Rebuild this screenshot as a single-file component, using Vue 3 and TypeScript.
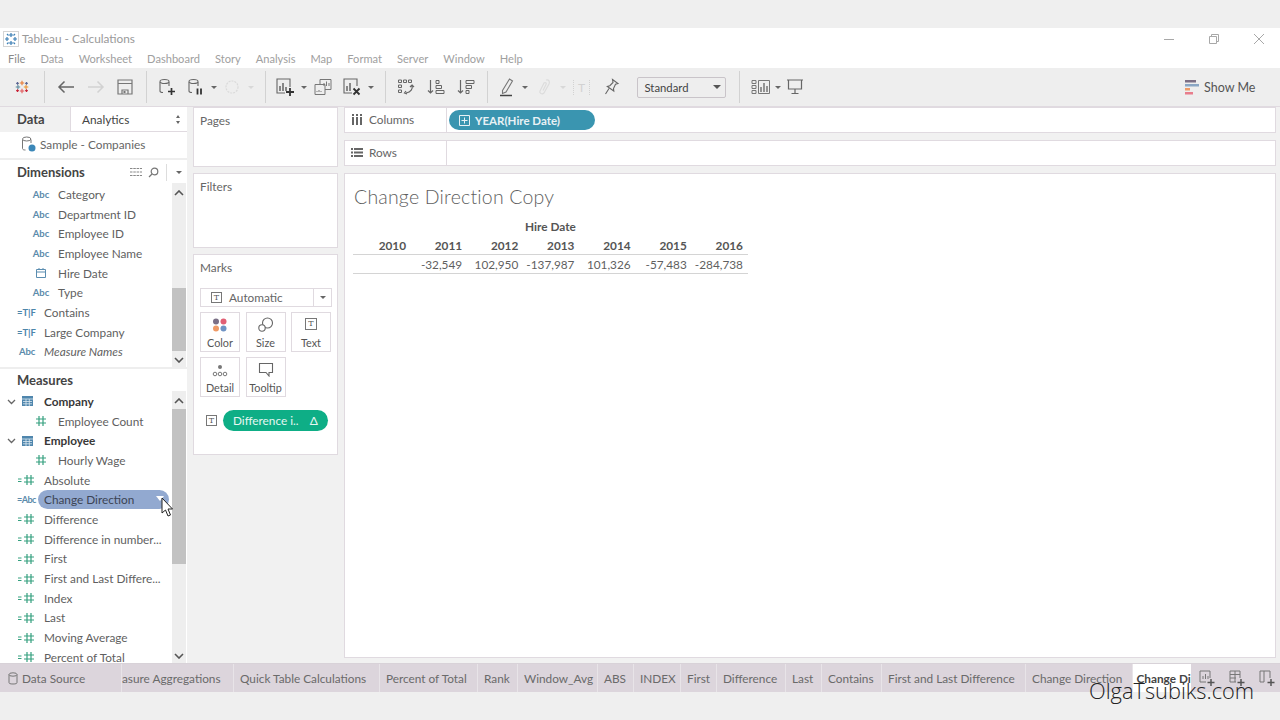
<script setup lang="ts">
type Field = { label: string; icon: string; level: number; bold?: boolean; italic?: boolean; active?: boolean }

const menus = ['File', 'Data', 'Worksheet', 'Dashboard', 'Story', 'Analysis', 'Map', 'Format', 'Server', 'Window', 'Help']

const dimensions: Field[] = [
  { label: 'Category', icon: 'abc', level: 1 },
  { label: 'Department ID', icon: 'abc', level: 1 },
  { label: 'Employee ID', icon: 'abc', level: 1 },
  { label: 'Employee Name', icon: 'abc', level: 1 },
  { label: 'Hire Date', icon: 'date', level: 1 },
  { label: 'Type', icon: 'abc', level: 1 },
  { label: 'Contains', icon: 'tf', level: 0 },
  { label: 'Large Company', icon: 'tf', level: 0 },
  { label: 'Measure Names', icon: 'abc', level: 0, italic: true },
]

const measures: Field[] = [
  { label: 'Company', icon: 'table', level: 0, bold: true },
  { label: 'Employee Count', icon: 'hash', level: 1 },
  { label: 'Employee', icon: 'table', level: 0, bold: true },
  { label: 'Hourly Wage', icon: 'hash', level: 1 },
  { label: 'Absolute', icon: 'calc', level: 0 },
  { label: 'Change Direction', icon: 'calcabc', level: 0, active: true },
  { label: 'Difference', icon: 'calc', level: 0 },
  { label: 'Difference in number...', icon: 'calc', level: 0 },
  { label: 'First', icon: 'calc', level: 0 },
  { label: 'First and Last Differe...', icon: 'calc', level: 0 },
  { label: 'Index', icon: 'calc', level: 0 },
  { label: 'Last', icon: 'calc', level: 0 },
  { label: 'Moving Average', icon: 'calc', level: 0 },
  { label: 'Percent of Total', icon: 'calc', level: 0 },
]

const years = ['2010', '2011', '2012', '2013', '2014', '2015', '2016']
const values = ['', '-32,549', '102,950', '-137,987', '101,326', '-57,483', '-284,738']

// tab widths come from the sheet names as Tableau sized them
const sheets = [
  { name: 'Measure Aggregations', w: 135 },
  { name: 'Quick Table Calculations', w: 146 },
  { name: 'Percent of Total', w: 98 },
  { name: 'Rank', w: 40 },
  { name: 'Window_Avg', w: 80 },
  { name: 'ABS', w: 36 },
  { name: 'INDEX', w: 47 },
  { name: 'First', w: 36 },
  { name: 'Difference', w: 69 },
  { name: 'Last', w: 36 },
  { name: 'Contains', w: 60 },
  { name: 'First and Last Difference', w: 144 },
  { name: 'Change Direction', w: 107 },
]
</script>

<template>
  <div class="app">
    <div class="band"></div>

    <div class="titlebar">
      <svg class="app-icon" width="16" height="16" viewBox="0 0 16 16" fill="none" stroke="#3c7fb5" stroke-width="1.2">
        <rect x="0.5" y="0.5" width="15" height="15" stroke="#d4d4d4" stroke-width="1" />
        <path d="M8 2v4M6 4h4M8 10v4M6 12h4M2 8h4M4 6v4M10 8h4M12 6v4M4 3l1.500 1.500M12 3l-1.500 1.500M4 13l1.500-1.500M12 13l-1.500-1.500" />
      </svg>
      <span class="app-title">Tableau - Calculations</span>
      <div class="win-btns">
        <svg width="12" height="12" viewBox="0 0 12 12" stroke="#a8a8a8" fill="none"><path d="M1 6.500h10" /></svg>
        <svg width="12" height="12" viewBox="0 0 12 12" stroke="#a8a8a8" fill="none"><path d="M1.500 3.500h7v7h-7zM3.500 3.500v-2h7v7h-2" /></svg>
        <svg width="12" height="12" viewBox="0 0 12 12" stroke="#a8a8a8" fill="none"><path d="M1 1l10 10M11 1L1 11" /></svg>
      </div>
    </div>

    <div class="menubar">
      <span v-for="m in menus" :key="m">{{ m }}</span>
    </div>

    <div class="toolbar">
      <div class="slot" style="width: 44px">
        <svg width="18" height="18" viewBox="0 0 20 20" fill="none" stroke-width="1.200">
          <path d="M10 3v5M7.500 5.500h5" stroke="#e8762c" /><path d="M10 12v5M7.500 14.500h5" stroke="#e15759" />
          <path d="M3 10h5M5.500 7.500v5" stroke="#59879b" /><path d="M12 10h5M14.500 7.500v5" stroke="#eb9129" />
          <path d="M5 4.500v3M3.500 6h3M15 4.500v3M13.500 6h3" stroke="#5b6591" /><path d="M5 12.500v3M3.500 14h3M15 12.500v3M13.500 14h3" stroke="#c72035" />
        </svg>
      </div>
      <div class="tb-sep first-sep"></div>

      <div class="slot w31 first-in">
        <svg width="18" height="14" viewBox="0 0 18 14" fill="none" stroke="#666" stroke-width="1.500"><path d="M17 7H2M7.500 1.500L2 7l5.500 5.500" /></svg>
      </div>
      <div class="slot w30">
        <svg width="18" height="14" viewBox="0 0 18 14" fill="none" stroke="#d2d2d2" stroke-width="1.500"><path d="M1 7h15M10.500 1.500L16 7l-5.500 5.500" /></svg>
      </div>
      <div class="slot w30">
        <svg width="16" height="16" viewBox="0 0 16 16" fill="none" stroke="#777" stroke-width="1.200"><path d="M1 1h14v14H1zM1 4.500h14M5 15v-4h6v4" /><rect x="6.500" y="12" width="2" height="2" fill="#777" stroke="none" /></svg>
      </div>
      <div class="tb-sep"></div>

      <div class="slot w30 first-in">
        <svg width="18" height="18" viewBox="0 0 18 18" fill="none" stroke="#666" stroke-width="1.100"><path d="M2 4v9c0 1 1 1.500 3 1.500M11 4v4" /><ellipse cx="6.500" cy="3.500" rx="4.500" ry="2" /><path d="M13.500 10v7M10 13.500h7" stroke="#333" stroke-width="1.700" /></svg>
      </div>
      <div class="slot w28">
        <svg width="18" height="18" viewBox="0 0 18 18" fill="none" stroke="#666" stroke-width="1.100"><path d="M2 4v9c0 1 1 1.500 3 1.500M11 4v4" /><ellipse cx="6.500" cy="3.500" rx="4.500" ry="2" /><path d="M10.500 10.500v6M14 10.500v6" stroke="#333" stroke-width="1.800" /></svg>
      </div>
      <div class="caret-slot w8"><i class="caret"></i></div>
      <div class="slot w30">
        <svg width="16" height="16" viewBox="0 0 16 16" fill="none" stroke="#dadada" stroke-width="1.200" stroke-dasharray="2 1"><circle cx="8" cy="8" r="6" /></svg>
      </div>
      <div class="caret-slot w8"><i class="caret light"></i></div>
      <div class="tb-sep sep-after-caret"></div>

      <div class="slot w30 first-in">
        <svg width="20" height="20" viewBox="0 0 20 20" fill="none" stroke="#666" stroke-width="1.100"><path d="M15 10V2H2v14h8" /><path d="M5 14V9M8 14V6M11 14v-4" stroke-width="1.500" /><path d="M15 11v8M11 15h8" stroke="#333" stroke-width="1.800" /></svg>
      </div>
      <div class="caret-slot w8"><i class="caret"></i></div>
      <div class="slot w30">
        <svg width="18" height="18" viewBox="0 0 18 18" fill="none" stroke="#777" stroke-width="1"><path d="M6 1.500h11v10H6z" /><path d="M1 6.500h10v10H1z" fill="#eee" /><path d="M10 8V5M12.500 8V3.500M15 8V5" /><path d="M3 14v-1M5 14v-2M7 14v-1" /></svg>
      </div>
      <div class="slot w30">
        <svg width="20" height="20" viewBox="0 0 20 20" fill="none" stroke="#666" stroke-width="1.100"><path d="M15 9V2H2v14h8" /><path d="M5 14V9M8 14V6" stroke-width="1.500" /><path d="M11.500 11.500l6 6M17.500 11.500l-6 6" stroke="#333" stroke-width="1.800" /></svg>
      </div>
      <div class="caret-slot w8"><i class="caret"></i></div>
      <div class="tb-sep sep-after-caret"></div>

      <div class="slot w31 first-in">
        <svg width="18" height="18" viewBox="0 0 18 18" fill="none" stroke="#666" stroke-width="1"><path d="M1.500 2h3v2.500h-3zM6.500 2h3v2.500h-3zM11.500 2h3v2.500h-3zM1.500 7h3v2.500h-3zM1.500 12h3v2.500h-3z" /><path d="M15 7c1 4-1 7-6 8M9 13l-1.500 2 2.500 1M13 9l2-2 2 2" stroke-width="1.200" /></svg>
      </div>
      <div class="slot w30">
        <svg width="18" height="18" viewBox="0 0 18 18" fill="none" stroke="#666" stroke-width="1.200"><path d="M3.500 2v13M1 12.500l2.500 2.500L6 12.500" /><path d="M9 2.500h3v3H9zM9 7.500h5.500v3H9zM9 12.500h8v3H9z" stroke-width="1" /></svg>
      </div>
      <div class="slot w30">
        <svg width="18" height="18" viewBox="0 0 18 18" fill="none" stroke="#666" stroke-width="1.200"><path d="M3.500 2v13M1 12.500l2.500 2.500L6 12.500" /><path d="M9 2.500h8v3H9zM9 7.500h5.500v3H9zM9 12.500h3v3H9z" stroke-width="1" /></svg>
      </div>
      <div class="tb-sep"></div>

      <div class="slot w28 first-in">
        <svg width="16" height="20" viewBox="0 0 16 20" fill="none" stroke="#777" stroke-width="1.100"><path d="M3.500 13.500L10.500 2l3 2-6.500 11-3.500 1.500z" /><path d="M1 18.500h12" stroke="#444" stroke-width="1.500" /></svg>
      </div>
      <div class="caret-slot w8"><i class="caret"></i></div>
      <div class="slot w-mid">
        <svg width="14" height="18" viewBox="0 0 14 18" fill="none" stroke="#dcdcdc" stroke-width="1.200"><path d="M9 2c3-1 4 2 3 4l-5 9c-2 2-5 0-4-2l4-8c1-1 3 0 2 1.500l-3 6" /></svg>
      </div>
      <div class="caret-slot w8"><i class="caret light"></i></div>
      <div class="slot w-mid">
        <span class="ghost-t">T</span>
      </div>
      <div class="slot w-mid">
        <svg width="16" height="18" viewBox="0 0 16 18" fill="none" stroke="#666" stroke-width="1.100"><path d="M8.500 1.500l5.500 4-2.500.8-2 4.200.3 2.500-6.500-4.500 2.500-.8 3.200-3.200zM5 10.500L1.500 16" /></svg>
      </div>
      <div class="fit-select">
        <span>Standard</span><i class="caret dark"></i>
      </div>
      <div class="tb-sep sep-select"></div>

      <div class="slot w30 showme-first">
        <svg width="20" height="16" viewBox="0 0 20 16" fill="none" stroke="#777" stroke-width="1"><path d="M1 1.500h4v3H1zM1 6.500h4v3H1zM1 11.500h4v3H1zM7.500 1.500h11v13h-11z" /><path d="M10 13V8M13 13V4M16 13V7" stroke-width="1.500" /></svg>
      </div>
      <div class="caret-slot w5"><i class="caret"></i></div>
      <div class="slot w-mid">
        <svg width="18" height="18" viewBox="0 0 18 18" fill="none" stroke="#666" stroke-width="1.200"><path d="M1 2h16M2.500 2v9h13V2M9 11v4M5.500 15.500h7" /></svg>
      </div>

      <div class="showme">
        <svg width="14" height="15" viewBox="0 0 14 15">
          <rect y="0" width="11" height="2.500" fill="#7c6f85" /><rect y="4" width="14" height="2.500" fill="#8aa6c4" />
          <rect y="8" width="5" height="2.500" fill="#ef9a66" /><rect y="12" width="8" height="2.500" fill="#e87d8c" />
        </svg>
        <span>Show Me</span>
      </div>
    </div>

    <div class="main">
      <aside class="data-pane">
        <div class="pane-tabs">
          <div class="tab-data">Data</div>
          <div class="tab-analytics"><span>Analytics</span><span class="updown"></span></div>
        </div>
        <div class="source">
          <svg width="15" height="16" viewBox="0 0 15 16" fill="none" stroke="#777" stroke-width="1"><path d="M1.500 3.500v9c0 1 1 1.500 3 1.500M10 3.500V7" /><ellipse cx="5.700" cy="3" rx="4.200" ry="2" /><circle cx="11" cy="12" r="3.500" fill="#3b87b8" stroke="none" /></svg>
          <span>Sample - Companies</span>
        </div>
        <div class="section-gap"></div>
        <div class="section-head">
          <span>Dimensions</span>
          <div class="head-tools">
            <svg width="12" height="10" viewBox="0 0 12 10" stroke="#888" stroke-width="1.200" stroke-dasharray="2.500 .8" fill="none"><path d="M0 1.500h12M0 5h12M0 8.500h12" /></svg>
            <svg width="11" height="11" viewBox="0 0 11 11" fill="none" stroke="#777" stroke-width="1.200"><circle cx="6.500" cy="4.500" r="3.300" /><path d="M4 7L1 10" /></svg>
            <i class="head-sep"></i>
            <i class="caret"></i>
          </div>
        </div>

        <div class="field-block dims">
          <div class="fields">
            <div v-for="f in dimensions" :key="f.label" class="field" :class="'lvl' + f.level">
              <span class="f-icon">
                <span v-if="f.icon === 'abc'" class="abc">Abc</span>
                <span v-else-if="f.icon === 'tf'" class="abc tf">=T|F</span>
                <svg v-else width="12" height="12" viewBox="0 0 12 12" fill="none" stroke="#5a8db0"><path d="M1.500 2.500h9v8h-9zM1.500 5h9M4 1v2M8 1v2" /></svg>
              </span>
              <span class="f-label" :class="{ italic: f.italic }">{{ f.label }}</span>
            </div>
          </div>
          <div class="scrollbar">
            <svg class="arrow" width="10" height="6" viewBox="0 0 10 6" fill="none" stroke="#555" stroke-width="1.600"><path d="M1 5l4-4 4 4" /></svg>
            <div class="track"><div class="thumb dims-thumb"></div></div>
            <svg class="arrow down" width="10" height="6" viewBox="0 0 10 6" fill="none" stroke="#555" stroke-width="1.600"><path d="M1 1l4 4 4-4" /></svg>
          </div>
        </div>

        <div class="section-gap"></div>
        <div class="section-head measures-head"><span>Measures</span></div>

        <div class="field-block meas">
          <div class="fields">
            <div v-for="f in measures" :key="f.label" class="field" :class="'lvl' + f.level">
              <svg v-if="f.bold" class="chev" width="9" height="6" viewBox="0 0 9 6" fill="none" stroke="#666" stroke-width="1.300"><path d="M1 1l3.500 3.500L8 1" /></svg>
              <span class="f-icon">
                <svg v-if="f.icon === 'table'" class="tbl" width="11" height="10" viewBox="0 0 11 10"><rect width="11" height="10" fill="#4f86ad" /><path d="M0 3h11M1 5.500h9M1 7.800h9M4 3v7M7.300 3v7" stroke="#dce8f0" stroke-width=".8" /></svg>
                <svg v-else-if="f.icon === 'hash'" width="12" height="12" viewBox="0 0 12 12" stroke="#35a07f" stroke-width="1.200"><path d="M4 1v10M8 1v10M1 4h10M1 8h10" /></svg>
                <svg v-else-if="f.icon === 'calc'" width="18" height="12" viewBox="0 0 18 12" fill="none" stroke="#35a07f" stroke-width="1.200"><path d="M1 5h3.500M1 7.500h3.500" stroke-width="1" /><path d="M10 1v10M14 1v10M7 4h10M7 8h10" /></svg>
                <span v-else class="abc eq-abc">=Abc</span>
              </span>
              <span class="f-label" :class="{ strong: f.bold, pill: f.active }">{{ f.label }}<i v-if="f.active" class="pill-caret"></i></span>
            </div>
          </div>
          <div class="scrollbar">
            <svg class="arrow" width="10" height="6" viewBox="0 0 10 6" fill="none" stroke="#555" stroke-width="1.600"><path d="M1 5l4-4 4 4" /></svg>
            <div class="track"><div class="thumb meas-thumb"></div></div>
            <svg class="arrow down" width="10" height="6" viewBox="0 0 10 6" fill="none" stroke="#555" stroke-width="1.600"><path d="M1 1l4 4 4-4" /></svg>
          </div>
        </div>
        <svg class="cursor" width="13" height="20" viewBox="0 0 13 20"><path d="M1 1v15l3.500-3 2.500 6 2.500-1-2.500-6h4.500z" fill="#fff" stroke="#222" stroke-width="1" /></svg>
      </aside>

      <div class="side-col">
        <section class="card pages"><h4>Pages</h4></section>
        <section class="card filters"><h4>Filters</h4></section>
        <section class="card marks">
          <h4>Marks</h4>
          <div class="mark-select">
            <span class="t-box">T</span>
            <span class="mark-type">Automatic</span>
            <span class="mark-drop"><i class="caret"></i></span>
          </div>
          <div class="mark-grid">
            <div class="mark-btn">
              <svg width="16" height="14" viewBox="0 0 16 14"><circle cx="4" cy="3.500" r="3" fill="#7a6f86" /><circle cx="11.500" cy="3.500" r="3" fill="#e15f74" /><circle cx="4" cy="10.500" r="3" fill="#ef9a66" /><circle cx="11.500" cy="10.500" r="3" fill="#6f93c4" /></svg>
              <span>Color</span>
            </div>
            <div class="mark-btn">
              <svg width="16" height="15" viewBox="0 0 16 15" fill="none" stroke="#666" stroke-width="1.100"><circle cx="9.500" cy="6" r="5" /><circle cx="4" cy="11" r="3.200" fill="#fff" /></svg>
              <span>Size</span>
            </div>
            <div class="mark-btn">
              <span class="t-box">T</span>
              <span>Text</span>
            </div>
            <div class="mark-btn">
              <svg width="16" height="14" viewBox="0 0 16 14" fill="none" stroke="#777"><circle cx="8" cy="4" r="2" fill="#777" stroke="none" /><circle cx="3" cy="11" r="1.800" /><circle cx="8" cy="11" r="1.800" /><circle cx="13" cy="11" r="1.800" /></svg>
              <span>Detail</span>
            </div>
            <div class="mark-btn">
              <svg width="16" height="15" viewBox="0 0 16 15" fill="none" stroke="#666" stroke-width="1.100"><path d="M1.500 1.500h13v9H11V14L8 10.500H1.500z" /></svg>
              <span>Tooltip</span>
            </div>
          </div>
          <div class="mark-field">
            <span class="t-box">T</span>
            <div class="green-pill"><span>Difference i..</span><span class="delta">Δ</span></div>
          </div>
        </section>
      </div>

      <div class="right-col">
        <div class="shelf">
          <div class="shelf-label">
            <svg width="12" height="11" viewBox="0 0 12 11" fill="#666"><rect x="1" y="0" width="2" height="2" /><rect x="5" y="0" width="2" height="2" /><rect x="9" y="0" width="2" height="2" /><rect x="1" y="3" width="2" height="8" /><rect x="5" y="3" width="2" height="8" /><rect x="9" y="3" width="2" height="8" /></svg>
            <span>Columns</span>
          </div>
          <div class="shelf-drop">
            <div class="blue-pill">
              <svg width="11" height="11" viewBox="0 0 11 11" fill="none" stroke="#e8f1f5"><path d="M.5.500h10v10H.500zM5.500 2.500v6M2.500 5.500h6" /></svg>
              <span>YEAR(Hire Date)</span>
            </div>
          </div>
        </div>
        <div class="shelf">
          <div class="shelf-label">
            <svg width="12" height="11" viewBox="0 0 12 11" fill="#666"><rect x="0" y="1" width="2" height="2" /><rect x="3" y="1" width="9" height="2" /><rect x="0" y="4.500" width="2" height="2" /><rect x="3" y="4.500" width="9" height="2" /><rect x="0" y="8" width="2" height="2" /><rect x="3" y="8" width="9" height="2" /></svg>
            <span>Rows</span>
          </div>
          <div class="shelf-drop"></div>
        </div>
        <div class="viz">
          <div class="viz-title">Change Direction Copy</div>
          <div class="crosstab">
            <div class="hire">Hire Date</div>
            <div class="tb-row years">
              <span v-for="y in years" :key="y">{{ y }}</span>
            </div>
            <div class="tb-row vals">
              <span v-for="(v, i) in values" :key="i">{{ v }}</span>
            </div>
          </div>
        </div>
      </div>
    </div>

    <div class="tabs">
      <div class="tab ds">
        <svg width="10" height="13" viewBox="0 0 10 13" fill="none" stroke="#777"><path d="M1 2.500v8c0 1 1 1.500 4 1.500s4-.5 4-1.500v-8" /><ellipse cx="5" cy="2.500" rx="4" ry="1.700" /></svg>
        <span>Data Source</span>
      </div>
      <div class="sheet-strip">
        <div class="sheet-inner">
          <div v-for="s in sheets" :key="s.name" class="tab" :style="{ width: s.w + 'px' }">{{ s.name }}</div>
          <div class="tab active">Change Direction Copy</div>
        </div>
      </div>
      <div class="tab-new first-new">
        <svg width="18" height="18" viewBox="0 0 18 18" fill="none" stroke="#777"><path d="M12 9V2H2v11h6M5 10V7M7.500 10V5M10 10V7" /><path d="M13 10v7M9.500 13.500h7" stroke="#555" stroke-width="1.500" /></svg>
      </div>
      <div class="tab-new">
        <svg width="18" height="18" viewBox="0 0 18 18" fill="none" stroke="#777"><path d="M12 9V2H2v11h6M2 5.500h10M2 9h6M7 2v11" /><path d="M13 10v7M9.500 13.500h7" stroke="#555" stroke-width="1.500" /></svg>
      </div>
      <div class="tab-new">
        <svg width="18" height="18" viewBox="0 0 18 18" fill="none" stroke="#777"><path d="M2 2h4v11H2zM6 2h6v7" /><path d="M13 10v7M9.500 13.500h7" stroke="#555" stroke-width="1.500" /></svg>
      </div>
    </div>

    <div class="band bottom"></div>
    <div class="watermark">OlgaTsubiks.com</div>
  </div>
</template>

<style scoped>
.app {
  position: relative;
  width: 1280px;
  height: 720px;
  display: flex;
  flex-direction: column;
  overflow: hidden;
  background: #fff;
  font-family: Lato, 'Liberation Sans', sans-serif;
  font-size: 11.800px;
  color: #5f5f5f;
}
.band { height: 28px; flex: none; background: #efefef; }

.titlebar { height: 21px; flex: none; display: flex; align-items: center; padding-left: 3px; }
.app-icon { margin-right: 3px; }
.app-title { color: #9a9a9a; font-size: 11.800px; }
.win-btns { margin-left: auto; display: flex; gap: 33px; padding-right: 15px; }

.menubar { height: 19px; flex: none; display: flex; gap: 15px; align-items: center; padding-left: 8px; color: #a0a0a0; font-size: 11.100px; }
.menubar span:first-child { color: #8a8a8a; }

.toolbar { height: 39px; flex: none; display: flex; align-items: center; background: #eeeeee; border-bottom: 1px solid #e0dae0; box-sizing: border-box; }
.slot { flex: none; height: 24px; display: flex; align-items: center; justify-content: center; }
.caret-slot { flex: none; height: 24px; display: flex; align-items: center; justify-content: center; }
.w5 { width: 4px; }
.w8 { width: 8px; }
.w-mid { width: 30px; }
.w28 { width: 28px; }
.w30 { width: 29.500px; }
.w31 { width: 31px; }
.first-in { margin-left: 5px; }
.tb-sep { flex: none; width: 1px; height: 32px; background: #d2d2d2; margin-left: 6px; }
.first-sep { margin-left: 0; }
.sep-after-caret { margin-left: 9.500px; }
.sep-select { margin-left: 13px; }
.showme-first { margin-left: 7px; }
.caret { display: block; width: 0; height: 0; border-left: 3px solid transparent; border-right: 3px solid transparent; border-top: 3.500px solid #666; }
.caret.light { border-top-color: #d8d8d8; }
.caret.dark { border-left-width: 4px; border-right-width: 4px; border-top-width: 4.500px; border-top-color: #555; }
.ghost-t { color: #d2d2d2; font-size: 12px; border-left: 1px dotted #d2d2d2; border-right: 1px dotted #d2d2d2; padding: 0 4px; }
.fit-select { flex: none; width: 89px; height: 21px; margin-left: 10px; box-sizing: border-box; border: 1px solid #c9c4c9; border-radius: 2px; display: flex; align-items: center; justify-content: space-between; padding: 0 4px 0 7px; font-size: 11.300px; color: #444; }
.showme { margin-left: auto; width: 95px; display: flex; align-items: center; gap: 5px; font-size: 12.500px; color: #555; }

.main { flex: 1; min-height: 0; display: flex; background: #f1f1f1; }

.data-pane { flex: none; width: 187px; position: relative; background: #fff; display: flex; flex-direction: column; }
.pane-tabs { height: 25px; flex: none; display: flex; box-sizing: border-box; }
.tab-data { width: 70px; box-sizing: border-box; background: #f1f1f1; font-weight: 700; font-size: 13px; color: #444; padding: 4px 0 0 17px; }
.tab-analytics { flex: 1; box-sizing: border-box; border-left: 1px solid #e0dae0; border-bottom: 1px solid #e0dae0; display: flex; align-items: center; justify-content: space-between; padding: 0 6px 0 11px; color: #444; }
.updown { width: 5px; height: 9px; position: relative; }
.updown::before, .updown::after { content: ''; position: absolute; left: 0; border-left: 2.500px solid transparent; border-right: 2.500px solid transparent; }
.updown::before { top: 0; border-bottom: 3.500px solid #666; }
.updown::after { bottom: 0; border-top: 3.500px solid #666; }
.source { height: 26px; flex: none; display: flex; align-items: center; gap: 4px; padding: 0 0 2px 21px; box-sizing: border-box; color: #666; }
.section-gap { height: 2px; flex: none; background: #eee; }
.section-head { height: 23px; flex: none; display: flex; align-items: center; justify-content: space-between; padding: 1px 5px 0 17px; box-sizing: border-box; font-weight: 700; font-size: 13px; color: #444; background: #fff; }
.measures-head { height: 22px; padding-top: 0; }
.head-tools { display: flex; align-items: center; gap: 6px; }
.head-sep { width: 1px; height: 17px; background: #ddd; margin: 0 3px 0 1px; }

.field-block { flex: none; display: flex; overflow: hidden; }
.field-block.dims { height: 184px; }
.field-block.meas { height: 272px; }
.fields { flex: none; width: 172px; }
.dims .fields { padding-top: 1.500px; }
.meas .fields { padding-top: 0.500px; }
.field { position: relative; height: 19.700px; display: flex; align-items: center; white-space: nowrap; }
.f-icon { flex: none; width: 27px; text-align: center; display: flex; justify-content: center; align-items: center; }
.field.lvl0 { padding-left: 17px; }
.field.lvl1 { padding-left: 31px; }
.field.lvl0 .f-icon { width: 27px; justify-content: flex-start; }
.field.lvl1 .f-icon { justify-content: center; width: 27px; padding-right: 7px; box-sizing: border-box; }
.field.lvl0 .f-icon .abc { padding-left: 2px; }
.tbl { margin-left: 5px; }
.abc { font-size: 9.500px; font-weight: 700; color: #5b8bab; letter-spacing: -0.100px; }
.tf { padding-left: 0 !important; color: #4d86ab; }
.eq-abc { padding-left: 0 !important; font-size: 9px; letter-spacing: -0.500px; }
.chev { position: absolute; left: 7px; top: 7px; }
.f-label { color: #5f5f5f; }
.f-label.italic { font-style: italic; }
.f-label.strong { font-weight: 700; color: #383838; }
.f-label.pill { position: relative; margin-left: -6px; padding-left: 6px; width: 125px; height: 19px; line-height: 19px; border-radius: 10px; background: #92a9d0; color: #3c4454; }
.pill-caret { position: absolute; right: 5px; top: 6px; border-left: 4px solid transparent; border-right: 4px solid transparent; border-top: 5px solid #fff; }

.scrollbar { flex: none; width: 14px; background: #eeeeee; display: flex; flex-direction: column; align-items: center; }
.arrow { flex: none; margin: 7px 0 5px; }
.arrow.down { margin: 7px 0 4px; }
.track { flex: 1; width: 14px; min-height: 0; }
.thumb { width: 14px; background: #c2c2c2; }
.dims-thumb { height: 63px; margin-top: 87px; }
.meas-thumb { height: 155px; margin-top: 0; }
.cursor { position: absolute; left: 161px; top: 390px; }

.side-col { flex: none; width: 145px; margin-left: 6px; display: flex; flex-direction: column; gap: 6px; }
.card { flex: none; box-sizing: border-box; background: #fff; border: 1px solid #e0dae0; padding: 5px 6px 6px; }
.card h4 { margin: 0; font-weight: 400; font-size: 11.800px; color: #666; }
.pages { height: 60px; }
.filters { height: 75px; }
.marks { height: 201px; padding: 5px 5px 0 6px; }
.mark-select { margin-top: 13px; height: 19px; box-sizing: border-box; border: 1px solid #e0dae0; display: flex; align-items: center; padding-left: 10px; }
.t-box { flex: none; width: 11px; height: 11px; box-sizing: border-box; border: 1px solid #777; font-family: 'DejaVu Serif', serif; font-size: 8px; line-height: 9px; text-align: center; color: #555; }
.mark-type { margin-left: 7px; color: #666; }
.mark-drop { margin-left: auto; width: 17px; height: 100%; border-left: 1px solid #e0dae0; display: flex; align-items: center; justify-content: center; }
.mark-grid { margin-top: 5px; display: grid; grid-template-columns: 40px 40px 40px; gap: 5px 5.500px; }
.mark-btn { height: 40px; box-sizing: border-box; border: 1px solid #e0dae0; display: flex; flex-direction: column; align-items: center; justify-content: flex-end; gap: 4px; padding-bottom: 2px; color: #555; font-size: 10.800px; }
.mark-btn .t-box { width: 12px; height: 12px; margin-bottom: 2px; line-height: 10px; }
.mark-field { margin-top: 13px; display: flex; align-items: center; gap: 6px; padding-left: 6px; }
.green-pill { width: 105px; height: 21px; box-sizing: border-box; border-radius: 11px; background: #0eae86; color: #e6f7f2; display: flex; align-items: center; justify-content: space-between; padding: 0 10px; }
.delta { font-size: 12px; }

.right-col { flex: none; width: 932px; margin-left: 6px; display: flex; flex-direction: column; gap: 7px; }
.shelf { flex: none; height: 26px; box-sizing: border-box; background: #fff; border: 1px solid #e0dae0; display: flex; }
.shelf-label { flex: none; width: 102px; box-sizing: border-box; border-right: 1px solid #e0dae0; display: flex; align-items: center; gap: 6px; padding: 0 0 1px 6px; color: #666; }
.shelf-drop { flex: 1; display: flex; align-items: center; padding-left: 2px; }
.blue-pill { width: 146px; height: 20px; box-sizing: border-box; border-radius: 10px; background: #3a95b0; color: #e8f1f5; display: flex; align-items: center; gap: 5px; padding-left: 10px; font-weight: 700; font-size: 11.500px; }
.viz { flex: none; height: 485px; box-sizing: border-box; background: #fff; border: 1px solid #e0dae0; padding: 11px 0 0 9px; }
.viz-title { font-size: 19.500px; font-weight: 300; letter-spacing: 0.200px; line-height: 24px; color: #5f5f5f; }
.crosstab { width: 395px; margin: 9px 0 0 -1px; }
.hire { text-align: center; font-weight: 700; color: #555; height: 18px; line-height: 18px; }
.tb-row { display: grid; grid-template-columns: 58px repeat(6, 56.170px); height: 19px; line-height: 19px; box-sizing: border-box; }
.tb-row span { text-align: right; padding-right: 5px; }
.years { font-weight: 700; color: #555; border-bottom: 1px solid #d4d4d4; }
.vals { border-bottom: 1px solid #d4d4d4; color: #5f5f5f; }

.tabs { height: 29px; flex: none; background: #dcd5dc; border-top: 1px solid #d8d2d8; box-sizing: border-box; display: flex; align-items: stretch; color: #6a6a6a; }
.tab { flex: none; box-sizing: border-box; display: flex; align-items: center; padding: 0 0 0 6.500px; border-right: 1px solid #e8e4e8; white-space: nowrap; }
.tab.ds { width: 122px; gap: 4px; padding-left: 8px; }
.sheet-strip { flex: none; width: 1069px; overflow: hidden; }
.sheet-inner { display: flex; height: 100%; margin-left: -23.500px; }
.tab.active { background: #fff; font-weight: 700; color: #444; padding-left: 4px; }
.tab-new { flex: none; width: 30px; display: flex; align-items: center; justify-content: center; }
.first-new { margin-left: 1px; }

.watermark { position: absolute; left: 1089px; top: 676px; font-family: 'Open Sans', sans-serif; font-weight: 300; font-size: 21.800px; line-height: 30px; color: #222; }
</style>
